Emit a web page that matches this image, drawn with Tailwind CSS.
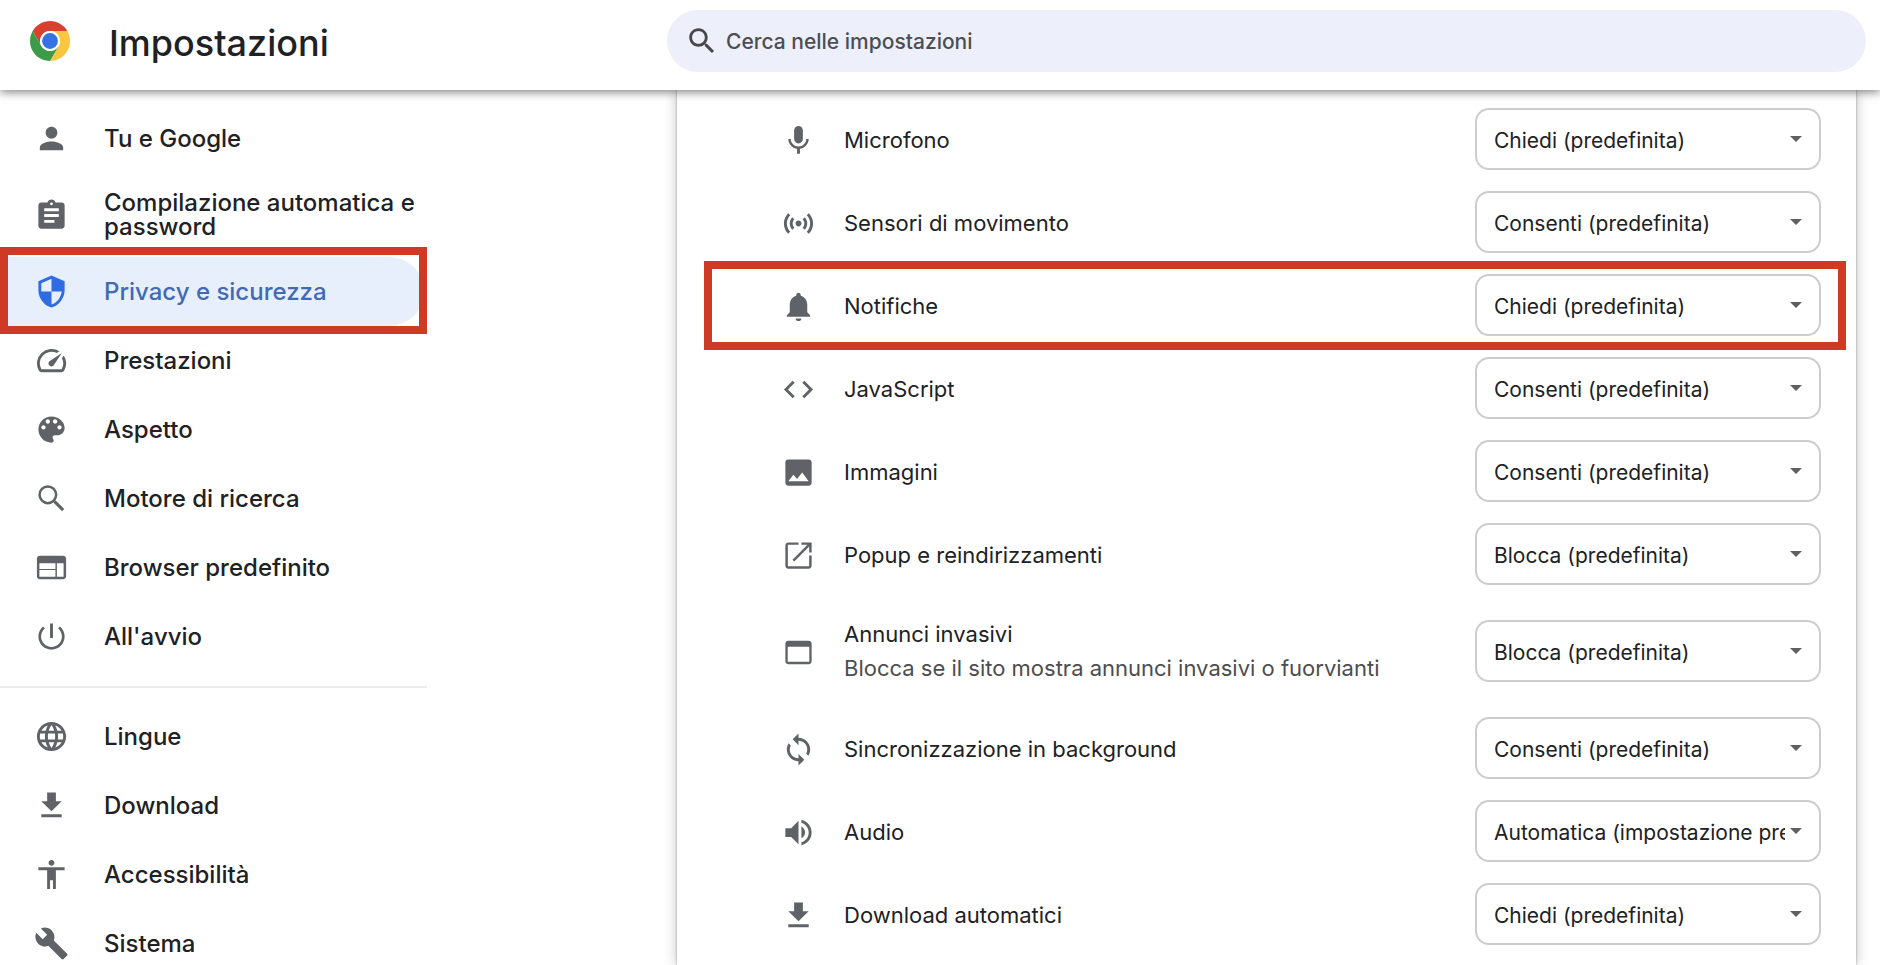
<!DOCTYPE html>
<html lang="it">
  <head>
    <meta charset="UTF-8" />
    <meta name="viewport" content="width=device-width, initial-scale=1" />
    <title>Impostazioni</title>
    <script src="https://cdn.jsdelivr.net/npm/@tailwindcss/browser@4"></script>
  </head>

  <body class="flex h-screen flex-col overflow-hidden bg-white font-['Inter','Liberation_Sans',sans-serif] text-[#202124]">
    <!-- Icon sprite -->
    <svg class="hidden" aria-hidden="true">
      <symbol id="person" viewBox="0 0 24 24"><path d="M12 12c2.21 0 4-1.79 4-4s-1.79-4-4-4-4 1.79-4 4 1.79 4 4 4zm0 2c-2.67 0-8 1.34-8 4v2h16v-2c0-2.66-5.33-4-8-4z" /></symbol>
      <symbol id="assignment" viewBox="0 0 24 24"><path d="M19 3h-4.18C14.4 1.84 13.3 1 12 1c-1.3 0-2.4.84-2.82 2H5c-1.1 0-2 .9-2 2v14c0 1.1.9 2 2 2h14c1.1 0 2-.9 2-2V5c0-1.1-.9-2-2-2zm-7 0c.55 0 1 .45 1 1s-.45 1-1 1-1-.45-1-1 .45-1 1-1zm2 14H7v-2h7v2zm3-4H7v-2h10v2zm0-4H7V7h10v2z" /></symbol>
      <symbol id="shield" viewBox="0 0 24 24"><path d="M12 1L3 5v6c0 5.55 3.84 10.74 9 12 5.16-1.26 9-6.45 9-12V5l-9-4zm0 10.99h7c-.53 4.12-3.28 7.79-7 8.94V12H5V6.3l7-3.11v8.8z" /></symbol>
      <symbol id="speed" viewBox="0 0 24 24"><path d="M20.38 8.57l-1.23 1.85a8 8 0 0 1-.22 7.58H5.07A8 8 0 0 1 15.58 6.85l1.85-1.23A10 10 0 0 0 3.35 19a2 2 0 0 0 1.72 1h13.85a2 2 0 0 0 1.74-1 10 10 0 0 0-.27-10.44zm-9.79 6.84a2 2 0 0 0 2.83 0l5.66-8.49-8.49 5.66a2 2 0 0 0 0 2.83z" /></symbol>
      <symbol id="palette" viewBox="0 0 24 24"><path d="M12 3c-4.97 0-9 4.03-9 9s4.03 9 9 9c.83 0 1.5-.67 1.5-1.5 0-.39-.15-.74-.39-1.01-.23-.26-.38-.61-.38-.99 0-.83.67-1.5 1.5-1.5H16c2.76 0 5-2.24 5-5 0-4.42-4.03-8-9-8zm-5.5 9c-.83 0-1.5-.67-1.5-1.5S5.67 9 6.5 9 8 9.67 8 10.5 7.33 12 6.5 12zm3-4C8.67 8 8 7.33 8 6.5S8.67 5 9.5 5s1.5.67 1.5 1.5S10.33 8 9.5 8zm5 0c-.83 0-1.5-.67-1.5-1.5S13.67 5 14.5 5s1.5.67 1.5 1.5S15.33 8 14.5 8zm3 4c-.83 0-1.5-.67-1.5-1.5S16.67 9 17.5 9s1.5.67 1.5 1.5-.67 1.5-1.5 1.5z" /></symbol>
      <symbol id="search" viewBox="0 0 24 24"><path d="M15.5 14h-.79l-.28-.27C15.41 12.59 16 11.11 16 9.5 16 5.91 13.09 3 9.5 3S3 5.91 3 9.5 5.91 16 9.5 16c1.61 0 3.09-.59 4.23-1.57l.27.28v.79l5 4.99L20.49 19l-4.99-5zm-6 0C7.01 14 5 11.99 5 9.5S7.01 5 9.5 5 14 7.01 14 9.5 11.99 14 9.5 14z" /></symbol>
      <symbol id="search-thin" viewBox="0 0 24 24"><g fill="none" stroke="currentColor"><circle cx="9.5" cy="9.5" r="5.7" stroke-width="1.7" /><path stroke-width="2.1" d="M14 14l6 6" /></g></symbol>
      <symbol id="web" viewBox="0 0 24 24"><path d="M20 4H4c-1.1 0-1.99.9-1.99 2L2 18c0 1.1.9 2 2 2h16c1.1 0 2-.9 2-2V6c0-1.1-.9-2-2-2zm-5.300 14.300H3.700v-4.600h11v4.600zm0-5.300H3.700V9h11v4zm5.600 5.300h-4.600V9h4.600v9.300z" /></symbol>
      <symbol id="power" viewBox="0 0 24 24"><path d="M13 3h-2v10h2V3zm4.830 2.170l-1.300 1.300C18.100 7.800 19.150 9.760 19.150 12c0 3.950-3.200 7.150-7.150 7.150S4.850 15.950 4.850 12c0-2.240 1-4.220 2.620-5.530L6.170 5.170C4.230 6.820 3 9.260 3 12c0 4.970 4.030 9 9 9s9-4.030 9-9c0-2.740-1.230-5.180-3.170-6.830z" /></symbol>
      <symbol id="globe" viewBox="0 0 24 24"><path d="M11.99 2C6.47 2 2 6.48 2 12s4.47 10 9.99 10C17.52 22 22 17.52 22 12S17.52 2 11.99 2zm6.93 6h-2.95c-.32-1.25-.78-2.45-1.38-3.56 1.84.63 3.37 1.91 4.33 3.56zM12 4.04c.83 1.2 1.48 2.53 1.91 3.96h-3.82c.43-1.43 1.08-2.76 1.91-3.96zM4.26 14C4.1 13.36 4 12.69 4 12s.1-1.36.26-2h3.38c-.08.66-.14 1.32-.14 2 0 .68.06 1.34.14 2H4.26zm.82 2h2.95c.32 1.25.78 2.45 1.38 3.56-1.84-.63-3.37-1.9-4.33-3.56zm2.95-8H5.08c.96-1.66 2.49-2.93 4.33-3.56C8.81 5.55 8.35 6.75 8.03 8zM12 19.96c-.83-1.2-1.48-2.53-1.91-3.96h3.82c-.43 1.43-1.08 2.76-1.91 3.96zM14.34 14H9.66c-.09-.66-.16-1.32-.16-2 0-.68.07-1.35.16-2h4.68c.09.65.16 1.32.16 2 0 .68-.07 1.34-.16 2zm.25 5.56c.6-1.11 1.06-2.31 1.38-3.56h2.95c-.96 1.65-2.49 2.93-4.33 3.56zM16.36 14c.08-.66.14-1.32.14-2 0-.68-.06-1.34-.14-2h3.38c.16.64.26 1.31.26 2s-.1 1.36-.26 2h-3.38z" /></symbol>
      <symbol id="download" viewBox="0 0 24 24"><path d="M19 9h-4V3H9v6H5l7 7 7-7zM5 18v2h14v-2H5z" /></symbol>
      <symbol id="accessibility" viewBox="0 0 24 24"><path d="M12 2c1.1 0 2 .9 2 2s-.9 2-2 2-2-.9-2-2 .9-2 2-2zm9 7h-6v13h-2v-6h-2v6H9V9H3V7h18v2z" /></symbol>
      <symbol id="wrench" viewBox="0 0 24 24"><path d="M22.7 19l-9.1-9.1c.9-2.3.4-5-1.500-6.900-2-2-5-2.400-7.400-1.300L9 6 6 9 1.600 4.700C.4 7.100.9 10.100 2.900 12.100c1.900 1.900 4.600 2.400 6.900 1.500l9.100 9.100c.4.400 1 .4 1.400 0l2.300-2.300c.5-.4.5-1.100.1-1.400z" /></symbol>
      <symbol id="mic" viewBox="0 0 24 24"><path d="M12 14c1.66 0 2.99-1.34 2.99-3L15 5c0-1.66-1.34-3-3-3S9 3.34 9 5v6c0 1.66 1.34 3 3 3zm5.300-3c0 3-2.540 5.100-5.300 5.100S6.700 14 6.700 11H5c0 3.410 2.720 6.230 6 6.720V21h2v-3.280c3.280-.48 6-3.300 6-6.720h-1.700z" /></symbol>
      <symbol id="sensors" viewBox="0 0 24 24"><path d="M7.76 16.24C6.67 15.16 6 13.66 6 12s.67-3.16 1.76-4.24l1.42 1.42C8.45 9.9 8 10.9 8 12c0 1.1.45 2.1 1.17 2.83l-1.41 1.41zm8.48 0C17.33 15.16 18 13.66 18 12s-.67-3.16-1.76-4.24l-1.42 1.42C15.55 9.9 16 10.9 16 12c0 1.1-.45 2.1-1.17 2.83l1.41 1.41zM12 10c-1.1 0-2 .9-2 2s.9 2 2 2 2-.9 2-2-.9-2-2-2zm8 2c0 2.21-.9 4.21-2.35 5.65l1.42 1.42C20.88 17.26 22 14.76 22 12s-1.12-5.26-2.93-7.07l-1.42 1.42C19.1 7.79 20 9.79 20 12zM6.35 6.35L4.93 4.93C3.12 6.74 2 9.24 2 12s1.12 5.26 2.93 7.07l1.42-1.42C4.9 16.21 4 14.21 4 12s.9-4.21 2.35-5.65z" /></symbol>
      <symbol id="bell" viewBox="0 0 24 24"><path d="M12 22c1.100 0 2-.7 2-1.800h-4c0 1.100.89 1.800 2 1.800zm6-6v-5c0-3.070-1.640-5.640-4.500-6.320V4c0-.83-.67-1.500-1.500-1.500s-1.500.67-1.500 1.500v.68C7.630 5.360 6 7.920 6 11v5l-2 2v1h16v-1l-2-2z" /></symbol>
      <symbol id="code" viewBox="0 0 24 24"><path d="M9.400 16.600L4.800 12l4.600-4.600L8 6l-6 6 6 6 1.400-1.400zm5.200 0l4.600-4.600-4.600-4.600L16 6l6 6-6 6-1.400-1.400z" /></symbol>
      <symbol id="image" viewBox="0 0 24 24"><path d="M21 19V5c0-1.100-.9-2-2-2H5c-1.100 0-2 .9-2 2v14c0 1.100.9 2 2 2h14c1.100 0 2-.9 2-2zM8.500 13.500l2.500 3.010L14.500 12l4.500 6H5l3.500-4.500z" /></symbol>
      <symbol id="launch" viewBox="0 0 24 24"><path d="M19.300 19.300H4.700V4.700H12V3H5c-1.110 0-2 .9-2 2v14c0 1.100.89 2 2 2h14c1.100 0 2-.9 2-2v-7h-1.700v7.300zM14 3v1.700h4.100l-10.200 10.200 1.200 1.200L19.300 5.900V10H21V3h-7z" /></symbol>
      <symbol id="window" viewBox="0 0 24 24"><path d="M19 4H5c-1.110 0-2 .9-2 2v12c0 1.100.89 2 2 2h14c1.100 0 2-.9 2-2V6c0-1.100-.89-2-2-2zm.4 14.400H4.600V8h14.800v10.400z" /></symbol>
      <symbol id="sync" viewBox="0 0 24 24"><path d="M12 4V1L8 5l4 4V6c3.310 0 6 2.690 6 6 0 1.010-.25 1.970-.7 2.800l1.460 1.460C19.540 15.030 20 13.570 20 12c0-4.420-3.580-8-8-8zm0 14c-3.310 0-6-2.690-6-6 0-1.010.25-1.970.7-2.800L5.240 7.740C4.460 8.970 4 10.430 4 12c0 4.420 3.580 8 8 8v3l4-4-4-4v3z" /></symbol>
      <symbol id="volume" viewBox="0 0 24 24"><path d="M3 9v6h4l5 5V4L7 9H3zm13.500 3c0-1.770-1.020-3.290-2.500-4.030v8.050c1.480-.73 2.500-2.250 2.500-4.020zM14 3.230v2.060c2.890.86 5 3.540 5 6.710s-2.110 5.850-5 6.710v2.060c4.010-.91 7-4.490 7-8.770s-2.990-7.860-7-8.770z" /></symbol>
      <symbol id="arrow" viewBox="0 0 12 6"><path d="M0 0h12L6 6z" /></symbol>
    </svg>

    <!-- Toolbar -->
    <header class="relative z-10 flex h-[90px] shrink-0 items-start bg-white pr-[14px] shadow-[0_2px_9px_rgba(0,0,0,0.5)]">
      <div class="flex h-[82px] w-[667px] shrink-0 items-center gap-[39px] pl-[30px]">
        <svg class="size-10" viewBox="0 0 48 48" aria-hidden="true">
          <path fill="#d9402f" d="M3.220 12A24 24 0 0 1 44.780 12H24A12 12 0 0 0 13.610 30z" />
          <path fill="#f8c63f" d="M44.780 12A24 24 0 0 1 24 48L34.390 30A12 12 0 0 0 24 12z" />
          <path fill="#3c9a48" d="M24 48A24 24 0 0 1 3.220 12L13.610 30A12 12 0 0 0 34.390 30z" />
          <circle cx="24" cy="24" r="12" fill="#fff" />
          <circle cx="24" cy="24" r="9.500" fill="#3572e3" />
        </svg>
        <h1 class="pt-1 text-[36px] font-medium">Impostazioni</h1>
      </div>
      <label class="mt-[10px] flex h-[62px] flex-1 items-center gap-[7px] rounded-full bg-[#edf0fa] pl-[18px]">
        <svg class="size-[34px] shrink-0 fill-current text-[#46484d]" aria-hidden="true"><use href="#search" /></svg>
        <input type="search" aria-label="Cerca nelle impostazioni" placeholder="Cerca nelle impostazioni" class="w-full bg-transparent pt-[2px] text-[21px] font-medium outline-none placeholder:text-[#4c4e53]" />
      </label>
    </header>

    <div class="flex min-h-0 flex-1">
      <!-- Sidebar -->
      <nav class="w-[427px] shrink-0 pt-[14px] text-[24px]/[24px] font-medium">
        <a href="#" class="flex h-[69px] items-center gap-[35px] pl-[34px]"><svg class="size-[35px] shrink-0 fill-[#5f6368]"><use href="#person" /></svg>Tu e Google</a>
        <a href="#" class="flex h-[84px] items-center gap-[35px] pl-[34px]"><svg class="size-[35px] shrink-0 fill-[#5f6368]"><use href="#assignment" /></svg>Compilazione automatica e password</a>
        <div class="relative">
          <a href="#" class="mr-[3px] flex h-[69px] items-center gap-[35px] rounded-r-full bg-[#e7effc] pl-[34px] text-[#4169b5]"><svg class="size-[35px] shrink-0 fill-[#2f6be2]"><use href="#shield" /></svg>Privacy e sicurezza</a>
          <div class="pointer-events-none absolute inset-x-0 -top-[10px] -bottom-2 border-8 border-[#cf3a24]"></div>
        </div>
        <a href="#" class="flex h-[69px] items-center gap-[35px] pl-[34px]"><svg class="size-[35px] shrink-0 fill-[#5f6368]"><use href="#speed" /></svg>Prestazioni</a>
        <a href="#" class="flex h-[69px] items-center gap-[35px] pl-[34px]"><svg class="size-[35px] shrink-0 fill-[#5f6368]"><use href="#palette" /></svg>Aspetto</a>
        <a href="#" class="flex h-[69px] items-center gap-[35px] pl-[34px]"><svg class="size-[35px] shrink-0 text-[#5f6368]"><use href="#search-thin" /></svg>Motore di ricerca</a>
        <a href="#" class="flex h-[69px] items-center gap-[35px] pl-[34px]"><svg class="size-[35px] shrink-0 fill-[#5f6368]"><use href="#web" /></svg>Browser predefinito</a>
        <a href="#" class="flex h-[69px] items-center gap-[35px] pl-[34px]"><svg class="size-[35px] shrink-0 fill-[#5f6368]"><use href="#power" /></svg>All'avvio</a>
        <hr class="mt-[15px] mb-[14px] border-t-2 border-[#ececec]" />
        <a href="#" class="flex h-[69px] items-center gap-[35px] pl-[34px]"><svg class="size-[35px] shrink-0 fill-[#5f6368]"><use href="#globe" /></svg>Lingue</a>
        <a href="#" class="flex h-[69px] items-center gap-[35px] pl-[34px]"><svg class="size-[35px] shrink-0 fill-[#5f6368]"><use href="#download" /></svg>Download</a>
        <a href="#" class="flex h-[69px] items-center gap-[35px] pl-[34px]"><svg class="size-[35px] shrink-0 fill-[#5f6368]"><use href="#accessibility" /></svg>Accessibilità</a>
        <a href="#" class="flex h-[69px] items-center gap-[35px] pl-[34px]"><svg class="size-[35px] shrink-0 fill-[#5f6368]"><use href="#wrench" /></svg>Sistema</a>
      </nav>

      <!-- Permission list -->
      <main class="mr-6 ml-[250px] flex-1 bg-white pt-[7px] text-[22px] shadow-[0_0_2px_rgba(0,0,0,0.35),0_0_12px_rgba(0,0,0,0.25)]">
        <div class="flex h-[83px] items-center pr-[35px] pl-[104px]">
          <svg class="mt-1 mr-7 size-[35px] shrink-0 fill-[#5f6368]"><use href="#mic" /></svg>
          <label for="microfono" class="mt-1 flex-1">Microfono</label>
          <div class="relative w-[346px]">
            <select id="microfono" class="block h-[62px] w-full appearance-none rounded-[14px] border-2 border-[#cdcdcd] pt-1 pr-[34px] pl-[17px] text-[21px]"><option>Chiedi (predefinita)</option></select>
            <svg class="pointer-events-none absolute top-7 right-[19px] h-[6px] w-3 fill-[#5f6063]"><use href="#arrow" /></svg>
          </div>
        </div>
        <div class="flex h-[83px] items-center pr-[35px] pl-[104px]">
          <svg class="mt-1 mr-7 size-[35px] shrink-0 fill-[#5f6368]"><use href="#sensors" /></svg>
          <label for="sensori" class="mt-1 flex-1">Sensori di movimento</label>
          <div class="relative w-[346px]">
            <select id="sensori" class="block h-[62px] w-full appearance-none rounded-[14px] border-2 border-[#cdcdcd] pt-1 pr-[34px] pl-[17px] text-[21px]"><option>Consenti (predefinita)</option></select>
            <svg class="pointer-events-none absolute top-7 right-[19px] h-[6px] w-3 fill-[#5f6063]"><use href="#arrow" /></svg>
          </div>
        </div>
        <div class="relative flex h-[83px] items-center pr-[35px] pl-[104px]">
          <svg class="mt-1 mr-7 size-[35px] shrink-0 fill-[#5f6368]"><use href="#bell" /></svg>
          <label for="notifiche" class="mt-1 flex-1">Notifiche</label>
          <div class="relative w-[346px]">
            <select id="notifiche" class="block h-[62px] w-full appearance-none rounded-[14px] border-2 border-[#cdcdcd] pt-1 pr-[34px] pl-[17px] text-[21px]"><option>Chiedi (predefinita)</option></select>
            <svg class="pointer-events-none absolute top-7 right-[19px] h-[6px] w-3 fill-[#5f6063]"><use href="#arrow" /></svg>
          </div>
          <div class="pointer-events-none absolute -top-[2px] right-[10px] -bottom-1 left-[27px] border-8 border-[#cf3a24]"></div>
        </div>
        <div class="flex h-[83px] items-center pr-[35px] pl-[104px]">
          <svg class="mt-1 mr-7 size-[35px] shrink-0 fill-[#5f6368]"><use href="#code" /></svg>
          <label for="javascript" class="mt-1 flex-1">JavaScript</label>
          <div class="relative w-[346px]">
            <select id="javascript" class="block h-[62px] w-full appearance-none rounded-[14px] border-2 border-[#cdcdcd] pt-1 pr-[34px] pl-[17px] text-[21px]"><option>Consenti (predefinita)</option></select>
            <svg class="pointer-events-none absolute top-7 right-[19px] h-[6px] w-3 fill-[#5f6063]"><use href="#arrow" /></svg>
          </div>
        </div>
        <div class="flex h-[83px] items-center pr-[35px] pl-[104px]">
          <svg class="mt-1 mr-7 size-[35px] shrink-0 fill-[#5f6368]"><use href="#image" /></svg>
          <label for="immagini" class="mt-1 flex-1">Immagini</label>
          <div class="relative w-[346px]">
            <select id="immagini" class="block h-[62px] w-full appearance-none rounded-[14px] border-2 border-[#cdcdcd] pt-1 pr-[34px] pl-[17px] text-[21px]"><option>Consenti (predefinita)</option></select>
            <svg class="pointer-events-none absolute top-7 right-[19px] h-[6px] w-3 fill-[#5f6063]"><use href="#arrow" /></svg>
          </div>
        </div>
        <div class="flex h-[83px] items-center pr-[35px] pl-[104px]">
          <svg class="mt-1 mr-7 size-[35px] shrink-0 fill-[#5f6368]"><use href="#launch" /></svg>
          <label for="popup" class="mt-1 flex-1">Popup e reindirizzamenti</label>
          <div class="relative w-[346px]">
            <select id="popup" class="block h-[62px] w-full appearance-none rounded-[14px] border-2 border-[#cdcdcd] pt-1 pr-[34px] pl-[17px] text-[21px]"><option>Blocca (predefinita)</option></select>
            <svg class="pointer-events-none absolute top-7 right-[19px] h-[6px] w-3 fill-[#5f6063]"><use href="#arrow" /></svg>
          </div>
        </div>
        <div class="flex h-[111px] items-center pr-[35px] pl-[104px]">
          <svg class="mt-1 mr-7 size-[35px] shrink-0 fill-[#5f6368]"><use href="#window" /></svg>
          <label for="annunci" class="flex-1 leading-[34px]">Annunci invasivi<span class="block text-[#4d4d4f]">Blocca se il sito mostra annunci invasivi o fuorvianti</span></label>
          <div class="relative w-[346px]">
            <select id="annunci" class="block h-[62px] w-full appearance-none rounded-[14px] border-2 border-[#cdcdcd] pt-1 pr-[34px] pl-[17px] text-[21px]"><option>Blocca (predefinita)</option></select>
            <svg class="pointer-events-none absolute top-7 right-[19px] h-[6px] w-3 fill-[#5f6063]"><use href="#arrow" /></svg>
          </div>
        </div>
        <div class="flex h-[83px] items-center pr-[35px] pl-[104px]">
          <svg class="mt-1 mr-7 size-[35px] shrink-0 fill-[#5f6368]"><use href="#sync" /></svg>
          <label for="sincronizzazione" class="mt-1 flex-1">Sincronizzazione in background</label>
          <div class="relative w-[346px]">
            <select id="sincronizzazione" class="block h-[62px] w-full appearance-none rounded-[14px] border-2 border-[#cdcdcd] pt-1 pr-[34px] pl-[17px] text-[21px]"><option>Consenti (predefinita)</option></select>
            <svg class="pointer-events-none absolute top-7 right-[19px] h-[6px] w-3 fill-[#5f6063]"><use href="#arrow" /></svg>
          </div>
        </div>
        <div class="flex h-[83px] items-center pr-[35px] pl-[104px]">
          <svg class="mt-1 mr-7 size-[35px] shrink-0 fill-[#5f6368]"><use href="#volume" /></svg>
          <label for="audio" class="mt-1 flex-1">Audio</label>
          <div class="relative w-[346px]">
            <select id="audio" class="block h-[62px] w-full appearance-none rounded-[14px] border-2 border-[#cdcdcd] pt-1 pr-[34px] pl-[17px] text-[21px]"><option>Automatica (impostazione predefinita)</option></select>
            <svg class="pointer-events-none absolute top-7 right-[19px] h-[6px] w-3 fill-[#5f6063]"><use href="#arrow" /></svg>
          </div>
        </div>
        <div class="flex h-[83px] items-center pr-[35px] pl-[104px]">
          <svg class="mt-1 mr-7 size-[35px] shrink-0 fill-[#5f6368]"><use href="#download" /></svg>
          <label for="download-automatici" class="mt-1 flex-1">Download automatici</label>
          <div class="relative w-[346px]">
            <select id="download-automatici" class="block h-[62px] w-full appearance-none rounded-[14px] border-2 border-[#cdcdcd] pt-1 pr-[34px] pl-[17px] text-[21px]"><option>Chiedi (predefinita)</option></select>
            <svg class="pointer-events-none absolute top-7 right-[19px] h-[6px] w-3 fill-[#5f6063]"><use href="#arrow" /></svg>
          </div>
        </div>
      </main>
    </div>
  </body>
</html>
